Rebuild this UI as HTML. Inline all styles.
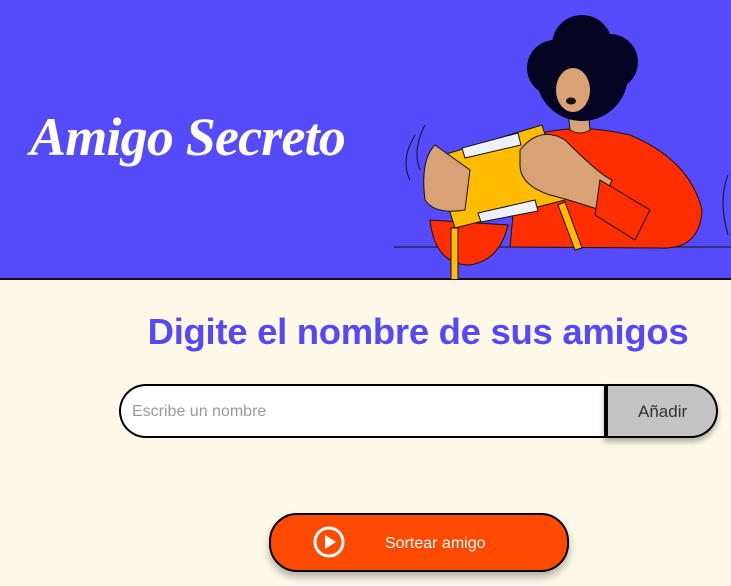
<!DOCTYPE html>
<html><head><style>
body{margin:0;width:731px;height:586px;overflow:hidden;background:#FEF8E9;font-family:"Liberation Sans",sans-serif;position:relative}
.hdr{position:absolute;left:0;top:0;width:731px;height:278px;background:#564BFB;border-bottom:2px solid #111}
.title{position:absolute;left:30px;top:106px;font-family:"Liberation Serif",serif;font-style:italic;font-weight:bold;font-size:54px;color:#fff;letter-spacing:-0.8px}
h2{position:absolute;left:0;width:836px;text-align:center;top:311px;margin:0;font-size:36.5px;color:#5548F6;font-weight:bold;letter-spacing:-0.3px}
.inp{position:absolute;left:119px;top:384px;width:483px;height:50px;border:2px solid #000;border-right:none;border-radius:27px 0 0 27px;background:#fff;box-sizing:content-box}
.inp span{position:absolute;left:11px;top:17px;font-size:16px;color:#9a9a9a}
.add{position:absolute;left:604px;top:384px;width:108px;height:50px;border:2px solid #000;border-left:4px solid #000;border-radius:0 27px 27px 0;background:#C4C4C4;box-shadow:0 4px 6px rgba(0,0,0,.3)}
.add span{position:absolute;left:30px;top:16px;font-size:17px;color:#333}
.btn{position:absolute;left:269px;top:513px;width:296px;height:55px;border:2px solid #000;border-radius:28px;background:#FF4A00;box-shadow:0 5px 8px rgba(0,0,0,.3)}
.btn span{position:absolute;left:114px;top:20px;color:#fff;font-size:16px}
</style></head><body>
<div class="hdr"></div>
<div class="title">Amigo Secreto</div>
<svg style="position:absolute;left:390px;top:0" width="341" height="279" viewBox="0 0 341 279">
<line x1="4" y1="247" x2="341" y2="247" stroke="#111" stroke-width="1"/>
<path d="M120 247 L130 140 Q180 120 240 135 Q300 160 312 210 Q310 250 270 248 Z" fill="#FF2E00" stroke="#111"/>
<path d="M40 220 Q45 265 80 265 Q110 260 118 225 Z" fill="#FF2E00" stroke="#111"/>
<path d="M178 112 L180 130 Q190 136 200 130 L198 108 Z" fill="#D9A274" stroke="#111"/>
<circle cx="192" cy="75" r="46" fill="#050322"/>
<circle cx="165" cy="68" r="28" fill="#050322"/><circle cx="220" cy="62" r="28" fill="#050322"/><circle cx="192" cy="45" r="30" fill="#050322"/><circle cx="200" cy="95" r="22" fill="#050322"/>
<ellipse cx="183" cy="90" rx="17" ry="22" fill="#D9A274"/>
<ellipse cx="181" cy="101" rx="5" ry="3.5" fill="#111"/>
<path d="M43 158 L152 125 L175 200 L65 228 Z" fill="#FFBC00" stroke="#111"/>
<path d="M72 148 L128 133 L131 145 L75 158 Z" fill="#EEF2F8" stroke="#111"/>
<path d="M88 213 L145 200 L148 211 L91 222 Z" fill="#EEF2F8" stroke="#111"/>
<rect x="61" y="228" width="7" height="52" fill="#FFBC00" stroke="#111"/>
<path d="M168 205 L185 250 L192 248 L175 202 Z" fill="#FFBC00" stroke="#111"/>
<path d="M45 145 Q30 160 35 200 Q45 215 75 210 L80 170 Z" fill="#D9A274" stroke="#111"/>
<path d="M130 150 Q150 125 175 140 Q210 175 222 180 L210 210 Q180 200 160 195 Q130 185 130 165 Z" fill="#D9A274" stroke="#111"/>
<path d="M210 180 L260 210 L245 240 L205 215 Z" fill="#FF2E00" stroke="#111"/>
<path d="M25 135 Q10 160 20 180 M35 125 Q22 150 30 170" stroke="#111" fill="none"/>
<path d="M338 175 Q328 200 338 235" stroke="#111" fill="none"/>
</svg>
<h2>Digite el nombre de sus amigos</h2>
<div class="inp"><span>Escribe un nombre</span></div>
<div class="add"><span>Añadir</span></div>
<div class="btn"><svg style="position:absolute;left:42px;top:11px" width="32" height="32" viewBox="0 0 32 32"><circle cx="16" cy="16" r="14" fill="none" stroke="#fff" stroke-width="3"/><path d="M12 9 L23 16 L12 23 Z" fill="#fff"/></svg><span>Sortear amigo</span></div>
</body></html>
